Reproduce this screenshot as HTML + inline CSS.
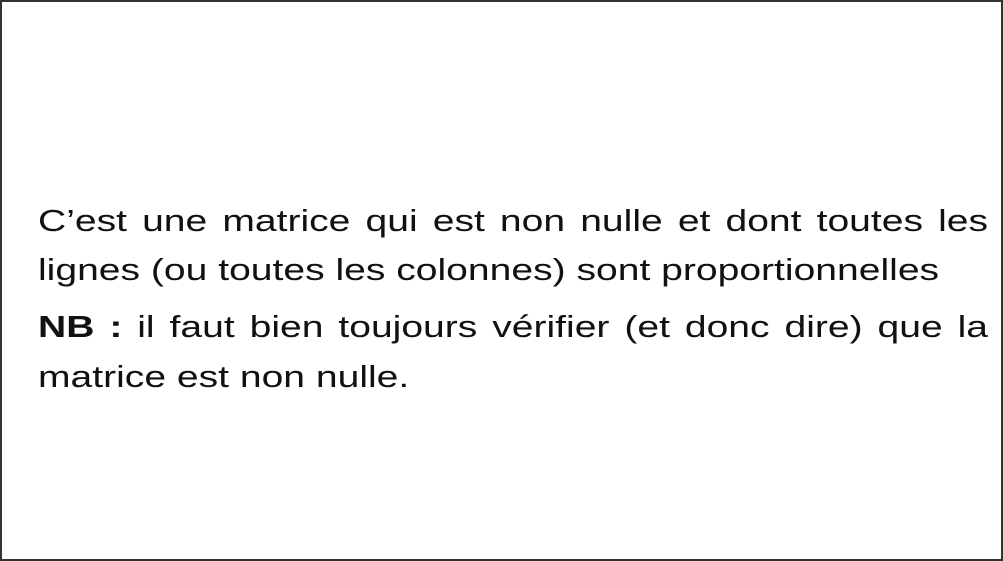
<!DOCTYPE html>
<html><head><meta charset="utf-8"><style>
html,body{margin:0;padding:0;background:#fff;}
body{width:1003px;height:561px;position:relative;overflow:hidden;}
.frame{position:absolute;left:0;top:0;width:999px;height:557px;border:2px solid #333;}
.l{position:absolute;left:38px;width:754px;font-family:"Liberation Sans","DejaVu Sans",sans-serif;font-size:31px;line-height:34px;color:#111;white-space:nowrap;transform:scaleX(1.26);transform-origin:0 0;}
.j{text-align:justify;text-align-last:justify;}
</style></head><body>
<div class="frame"></div>
<div class="l j" style="top:204px">C’est une matrice qui est non nulle et dont toutes les</div>
<div class="l" style="top:253px">lignes (ou toutes les colonnes) sont proportionnelles</div>
<div class="l j" style="top:310px"><b>NB :</b> il faut bien toujours vérifier (et donc dire) que la</div>
<div class="l" style="top:360px">matrice est non nulle.</div>
</body></html>
